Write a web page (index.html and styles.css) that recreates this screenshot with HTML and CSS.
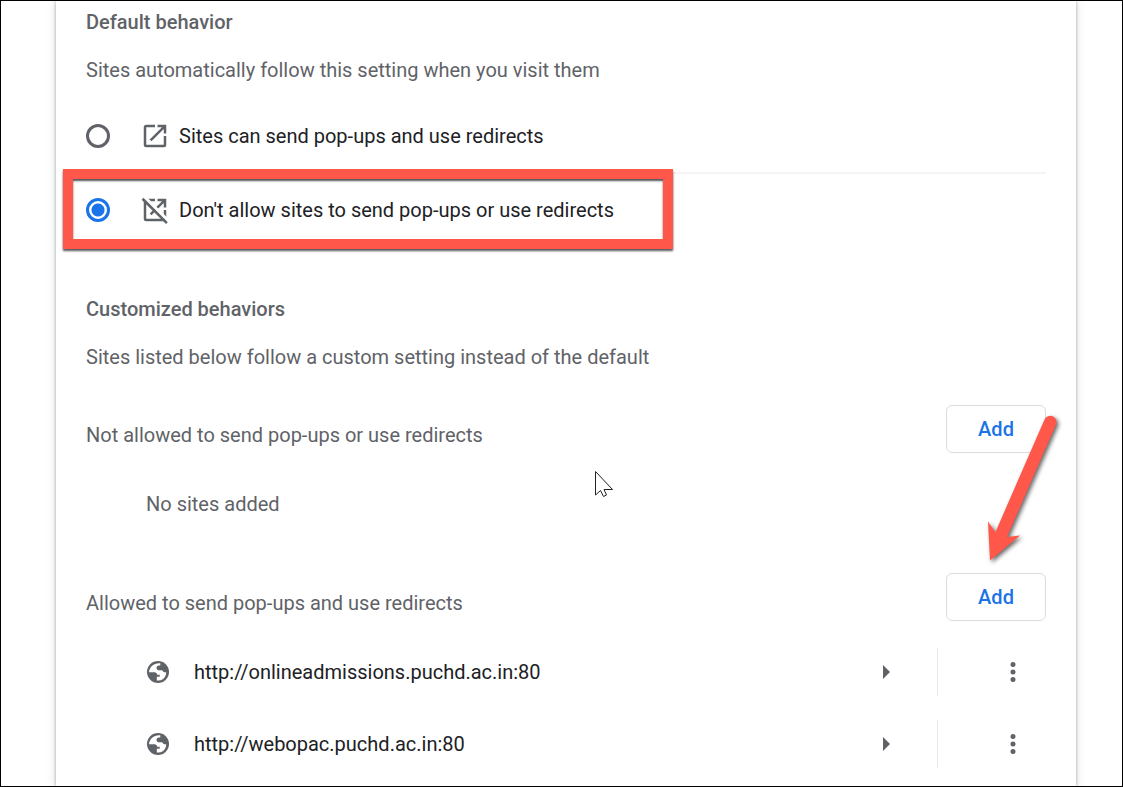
FILE: index.html
```html
<!DOCTYPE html>
<html lang="en">
<head>
<meta charset="utf-8">
<title>Pop-ups and redirects</title>
<link rel="stylesheet" href="styles.css">
</head>
<body>
<svg class="sprite" aria-hidden="true">
  <symbol id="globe" viewBox="0 0 24 24">
    <circle cx="12" cy="12" r="11" fill="#5f6368"/>
    <path d="M3 12.300h5.600c1.600 0 2.200 1.200 2.600 2.400h2.500v2.100h-2.900v3.600c4 .6 6.700-1 8.200-3.600.9-1.500 1.300-3 1.200-4.600h-1.800c-1-.1-1.500-.9-2.300-1.900h-3.500c-1.400-.2-2.100-1.300-2.100-2.500s.9-2.300 2.400-2.400h1.400V3.300C8.500 2.600 3.400 6.500 3 12.300z" fill="#fff"/>
  </symbol>
  <symbol id="dots" viewBox="0 0 24 24">
    <path d="M12 8a2 2 0 1 0 0-4 2 2 0 0 0 0 4zm0 2a2 2 0 1 0 0 4 2 2 0 0 0 0-4zm0 6a2 2 0 1 0 0 4 2 2 0 0 0 0-4z" fill="#5f6368"/>
  </symbol>
</svg>
<div class="frame">
  <main class="panel">
    <section class="defaults">
      <h2>Default behavior</h2>
      <p class="hint">Sites automatically follow this setting when you visit them</p>
      <label class="option">
        <input type="radio" name="popups">
        <svg class="option-icon" viewBox="0 0 24 24"><path d="M19 19H5V5h7V3H5a2 2 0 0 0-2 2v14a2 2 0 0 0 2 2h14a2 2 0 0 0 2-2v-7h-2zM14 3v2h3.590l-9.830 9.830 1.410 1.410L19 6.410V10h2V3z" fill="#5f6368"/></svg>
        <span>Sites can send pop-ups and use redirects</span>
      </label>
      <label class="option option-blocked">
        <input type="radio" name="popups" checked>
        <svg class="option-icon" viewBox="0 0 24 24"><path d="M19 19H5V5h7V3H5a2 2 0 0 0-2 2v14a2 2 0 0 0 2 2h14a2 2 0 0 0 2-2v-7h-2zM14 3v2h3.590l-9.830 9.830 1.410 1.410L19 6.410V10h2V3z" fill="#5f6368"/><path d="M3.500 1.500l19 19" stroke="#fff" stroke-width="2.400"/><path d="M2 3l19.500 19.500" stroke="#5f6368" stroke-width="2"/></svg>
        <span>Don't allow sites to send pop-ups or use redirects</span>
        <span class="highlight"></span>
      </label>
    </section>
    <section>
      <h2>Customized behaviors</h2>
      <p class="hint">Sites listed below follow a custom setting instead of the default</p>
      <div class="list-head">
        <h3>Not allowed to send pop-ups or use redirects</h3>
        <button class="add" type="button">Add</button>
      </div>
      <p class="empty">No sites added</p>
      <div class="list-head">
        <h3>Allowed to send pop-ups and use redirects</h3>
        <button class="add" type="button">Add
          <svg class="arrow" viewBox="0 0 90 160" aria-hidden="true"><path d="M69.500 18.500A6.200 6.200 0 0 1 81 23.500L32 136L45 134.500L15 159.500L13 120.500L20.500 131Z" fill="#ff584a"/></svg>
        </button>
      </div>
      <ul class="sites">
        <li>
          <svg class="globe"><use href="#globe"/></svg>
          <span class="url">http://onlineadmissions.puchd.ac.in:80</span>
          <button class="details" type="button" aria-label="Site details"></button>
          <button class="more" type="button" aria-label="More actions"><svg><use href="#dots"/></svg></button>
        </li>
        <li>
          <svg class="globe"><use href="#globe"/></svg>
          <span class="url">http://webopac.puchd.ac.in:80</span>
          <button class="details" type="button" aria-label="Site details"></button>
          <button class="more" type="button" aria-label="More actions"><svg><use href="#dots"/></svg></button>
        </li>
      </ul>
    </section>
  </main>
  <svg class="cursor" viewBox="0 0 20 28" aria-hidden="true"><path d="M2.500 1.500V25L7.500 20.500L10.500 26.500L13.500 25L11 19.500H19.500Z" fill="#fff" stroke="#222" stroke-width="1"/></svg>
</div>
</body>
</html>
```
FILE: styles.css
```css
* {
  box-sizing: border-box;
}

body {
  margin: 0;
  background: #fff;
  color: #202124;
  font: 400 20px/24px Roboto, "Liberation Sans", sans-serif;
}

h2, h3, p, ul {
  margin: 0;
  padding: 0;
}

button {
  font: inherit;
  background: none;
  border: 0;
  padding: 0;
}

.sprite {
  display: none;
}

.frame {
  position: relative;
  min-height: 100vh;
  display: flex;
  border: 1px solid #000;
  overflow: hidden;
}

.panel {
  flex: 1;
  margin: 0 46px 0 55px;
  padding: 9px 30px 6px;
  box-shadow: 0 0 3px rgba(60, 64, 67, .45), 0 2px 10px rgba(60, 64, 67, .15);
}

h2 {
  font-size: 20px;
  font-weight: 500;
  line-height: 24px;
  color: #5f6368;
}

.hint {
  margin: 24px 0 18px;
  color: #5f6368;
}

.defaults {
  margin-bottom: 51px;
}

.option {
  position: relative;
  display: flex;
  align-items: center;
  height: 72px;
}

.option-blocked {
  height: 74px;
  border-top: 2px solid #f4f4f4;
}

.option input {
  appearance: none;
  width: 24px;
  height: 24px;
  margin: 0 30px 0 0;
  border: 3px solid #5f6368;
  border-radius: 50%;
}

.option input:checked {
  border-color: #1a73e8;
  background: radial-gradient(circle, #1a73e8 6px, transparent 7px);
}

.option-icon {
  width: 30px;
  height: 30px;
  margin-right: 9px;
}

.highlight {
  position: absolute;
  top: -5px;
  left: -23px;
  width: 610px;
  height: 80px;
  border: 10px solid #ff584a;
  box-shadow: 0 2px 2px #555, inset 0 2px 2px #555;
}

.list-head {
  display: flex;
  justify-content: space-between;
  margin-top: 36px;
}

h3 {
  padding-top: 18px;
  font-size: 20px;
  font-weight: 400;
  line-height: 24px;
  color: #5f6368;
}

.add {
  position: relative;
  width: 100px;
  height: 48px;
  border: 1px solid #dadce0;
  border-radius: 6px;
  color: #1a73e8;
  font-weight: 500;
}

.arrow {
  position: absolute;
  left: 28px;
  bottom: 59px;
  width: 90px;
  height: 160px;
  filter: drop-shadow(2px 2px 2px rgba(0, 0, 0, .6));
}

.empty {
  padding: 39px 60px 21px;
  color: #5f6368;
}

.sites {
  list-style: none;
  padding: 15px 0 0 60px;
}

.sites li {
  display: flex;
  align-items: center;
  height: 72px;
}

.globe {
  width: 24px;
  height: 24px;
  margin-right: 24px;
}

.url {
  flex: 1;
}

.details {
  width: 54px;
  height: 48px;
}

.details::before {
  content: "";
  display: block;
  border: solid transparent;
  border-width: 7px 0 7px 7px;
  border-left-color: #5f6368;
  width: 0;
}

.more {
  width: 109px;
  height: 48px;
  padding-right: 18px;
  border-left: 1px solid #e8eaed;
  text-align: right;
}

.more svg {
  display: inline-block;
  width: 30px;
  height: 30px;
  vertical-align: middle;
}

.cursor {
  position: absolute;
  left: 592px;
  top: 469px;
  width: 20px;
  height: 28px;
}
```
